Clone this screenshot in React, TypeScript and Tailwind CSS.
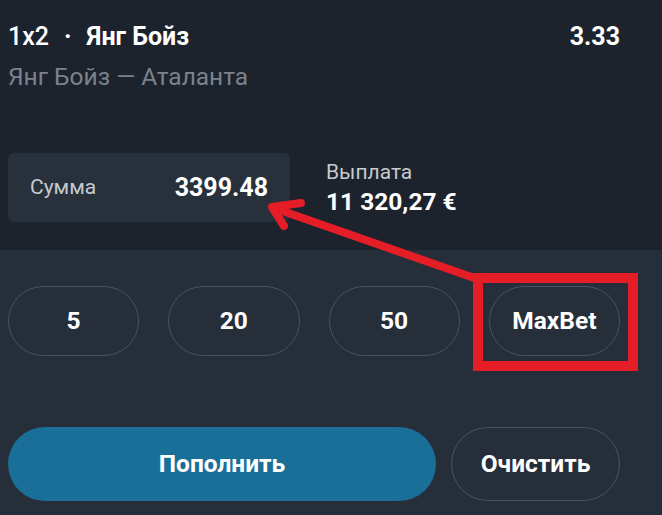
import React from "react";

const quick = ["5", "20", "50", "MaxBet"];

export default function App() {
  return (
    <div
      className="relative w-[662px] h-[515px] overflow-hidden bg-[#262e3a] text-white"
      style={{ fontFamily: "Roboto, 'Liberation Sans', sans-serif" }}
    >
      {/* Selection info */}
      <div className="bg-[#1d232d] pl-2 pr-[42px] pt-[22px] pb-[28px]">
        <div className="flex items-center justify-between text-[25px] leading-[30px]">
          <div className="flex items-center">
            <span className="font-medium">1x2</span>
            <span className="mx-[15px] font-bold">·</span>
            <span className="font-bold">Янг Бойз</span>
          </div>
          <span className="font-bold">3.33</span>
        </div>
        <div className="mt-[10px] text-[24.5px] leading-[30px] text-[#7c828b]">
          Янг Бойз — Аталанта
        </div>

        <div className="mt-[61px] flex items-center gap-[36px]">
          <div className="w-[282px] h-[69px] rounded-md bg-[#28303c] flex items-center justify-between pl-[22px] pr-[22px]">
            <span className="text-[21px] text-[#c6cacf]">Сумма</span>
            <span className="text-[25px] font-bold">3399.48</span>
          </div>
          <div className="flex flex-col gap-[2px]">
            <span className="text-[21px] leading-[26px] text-[#c6cacf]">Выплата</span>
            <span className="text-[24.5px] leading-[30px] font-bold">11 320,27 €</span>
          </div>
        </div>
      </div>

      {/* Quick amounts */}
      <div className="pl-2 pr-[42px] pt-[36px]">
        <div className="flex gap-[29px]">
          {quick.map((q) => (
            <button
              key={q}
              className="w-[132px] h-[70px] rounded-full border border-[#4a525d] text-[24.5px] font-bold flex items-center justify-center"
            >
              {q}
            </button>
          ))}
        </div>

        <div className="mt-[71px] flex gap-[15px]">
          <button className="w-[428px] h-[74px] rounded-full bg-[#1a6f98] text-[24.5px] font-bold flex items-center justify-center">
            Пополнить
          </button>
          <button className="w-[169px] h-[74px] rounded-full border border-[#4a525d] text-[24.5px] font-bold flex items-center justify-center">
            Очистить
          </button>
        </div>
      </div>

      {/* Annotation */}
      <svg
        className="absolute inset-0 pointer-events-none"
        width="662"
        height="515"
        viewBox="0 0 662 515"
      >
        <rect x="478" y="278" width="155" height="88" fill="none" stroke="#e51d27" strokeWidth="10" />
        <line x1="480" y1="280" x2="274" y2="208" stroke="#e51d27" strokeWidth="8" strokeLinecap="round" />
        <polyline
          points="301,203 272,207 284,226"
          fill="none"
          stroke="#e51d27"
          strokeWidth="8"
          strokeLinecap="round"
          strokeLinejoin="round"
        />
      </svg>
    </div>
  );
}
